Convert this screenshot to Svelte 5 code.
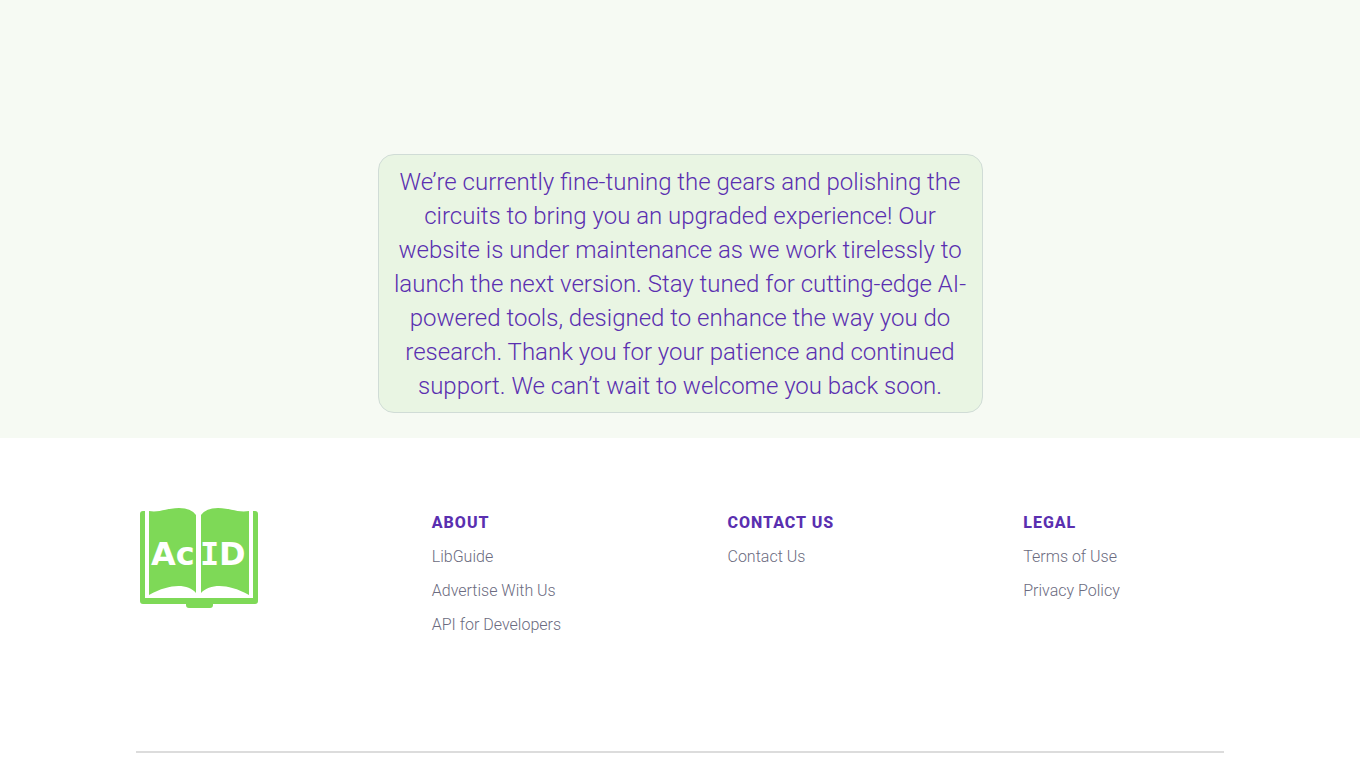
<script>
  const columns = [
    {
      title: 'About',
      links: [
        { label: 'LibGuide', href: '#libguide' },
        { label: 'Advertise With Us', href: '#advertise' },
        { label: 'API for Developers', href: '#api' }
      ]
    },
    {
      title: 'Contact Us',
      links: [{ label: 'Contact Us', href: '#contact' }]
    },
    {
      title: 'Legal',
      links: [
        { label: 'Terms of Use', href: '#terms' },
        { label: 'Privacy Policy', href: '#privacy' }
      ]
    }
  ]
</script>

<main class="hero">
  <p class="notice">
    We’re currently fine-tuning the gears and polishing the circuits to bring you an upgraded
    experience! Our website is under maintenance as we work tirelessly to launch the next version.
    Stay tuned for cutting-edge AI-powered tools, designed to enhance the way you do research. Thank
    you for your patience and continued support. We can’t wait to welcome you back soon.
  </p>
</main>

<footer class="footer">
  <div class="footer-grid">
    <a class="logo" href="#home" aria-label="AcID home">
      <svg viewBox="0 0 126 108" width="126" height="108">
        <g fill="#7ed957">
          <path d="M7 9h2v87h108V9h2q3 0 3 3v87q0 3-3 3H77v1q0 3-3 3H53q-3 0-3-3v-1H7q-3 0-3-3V12q0-3 3-3z" />
          <path d="M13 9C23 11 31 6 43 6Q55 6 60 13V91C52 82 35 81 13 93z" />
          <path d="M65 13Q70 6 82 6C94 6 102 11 113 9V93C91 81 74 82 65 91z" />
        </g>
        <g class="logo-text" fill="#fff">
          <text x="15" y="63">Ac</text>
          <text class="slab" x="64" y="63">I</text>
          <text x="83" y="63">D</text>
        </g>
      </svg>
    </a>

    {#each columns as column}
      <nav class="column" aria-label={column.title}>
        <h2>{column.title}</h2>
        <ul>
          {#each column.links as link}
            <li><a href={link.href}>{link.label}</a></li>
          {/each}
        </ul>
      </nav>
    {/each}
  </div>
  <hr />
</footer>

<style>
  :global(body) {
    background: #fff;
    font-family: Roboto, 'Liberation Sans', sans-serif;
    font-weight: 300;
  }

  .hero {
    display: flex;
    justify-content: center;
    padding: 154px 24px 25px;
    background: #f6faf3;
  }

  .notice {
    box-sizing: border-box;
    max-width: 605px;
    margin: 0;
    padding: 10px 12px 9px;
    border: 1px solid #d0dcd6;
    border-radius: 16px;
    background: #e9f5e3;
    color: #5a2fb0;
    font-size: 24px;
    line-height: 34px;
    text-align: center;
  }

  .footer {
    width: 80%;
    margin: 0 auto;
    padding-top: 64px;
  }

  .footer-grid {
    display: grid;
    grid-template-columns: repeat(4, 1fr);
    gap: 95px;
    min-height: 249px;
  }

  .logo svg {
    display: block;
  }

  .logo-text {
    font-family: 'DejaVu Sans', Verdana, sans-serif;
    font-size: 32px;
    font-weight: 700;
  }

  .slab {
    font-family: 'DejaVu Sans Mono', monospace;
  }

  .column {
    padding-top: 4px;
  }

  h2 {
    margin: 0;
    color: #5a2fb0;
    font-size: 16px;
    font-weight: 800;
    line-height: 34px;
    letter-spacing: 1px;
    text-transform: uppercase;
  }

  ul {
    margin: 0;
    padding: 0;
    list-style: none;
  }

  li {
    line-height: 34px;
  }

  .column a {
    color: #6b6b80;
    font-size: 16px;
    text-decoration: none;
    white-space: nowrap;
  }

  .column a:hover {
    color: #5a2fb0;
  }

  hr {
    height: 2px;
    margin: 0 0 11px;
    border: 0;
    background: #dcdcdc;
  }
</style>
